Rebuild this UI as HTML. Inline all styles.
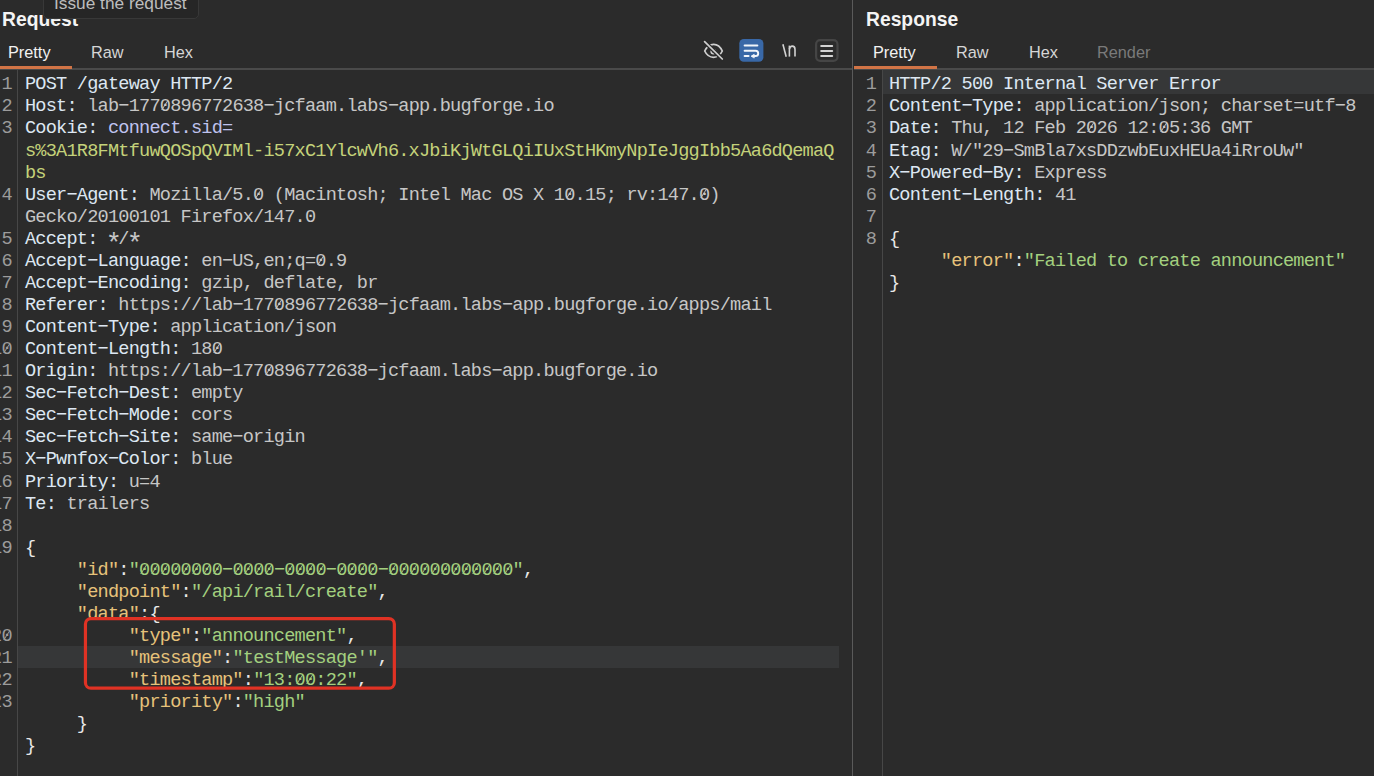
<!DOCTYPE html>
<html><head><meta charset="utf-8">
<style>
html,body{margin:0;padding:0;}
body{width:1374px;height:776px;overflow:hidden;background:#2b2b2b;position:relative;font-family:"Liberation Sans",sans-serif;}
.abs{position:absolute;}
.title{position:absolute;font-weight:bold;font-size:19.3px;color:#f4f4f4;line-height:1;white-space:nowrap;}
.tab{position:absolute;font-size:16.3px;color:#d6d6d6;line-height:1;white-space:nowrap;}
.sep{position:absolute;height:2px;background:#4a4a4a;}
.orange{position:absolute;height:3px;background:#d17446;}
.vline{position:absolute;width:1px;background:#474747;}
.code{position:absolute;font-family:"Liberation Mono",monospace;font-size:18.6px;letter-spacing:-0.79px;white-space:pre;}
.row{position:absolute;left:0;height:22px;line-height:22px;}
.ln{position:absolute;font-family:"Liberation Mono",monospace;font-size:18.6px;letter-spacing:-0.79px;white-space:pre;color:#9c9c9c;text-align:right;}
.hn{color:#dde7f2;}
.hv{color:#c6c6c6;}
.ck{color:#bfc2ee;}
.cv{color:#c4d27a;}
.jk{color:#e6c27a;}
.js{color:#a3d07f;}
.jp{color:#e8e8e8;}
.hl{position:absolute;height:22px;background:#363738;}
.z{position:relative;font-weight:normal;}
.ast{display:inline-block;font-weight:normal;transform:translateY(6px) scale(1.45);}
.z::after{content:"";position:absolute;left:4.4px;top:4.8px;width:1.3px;height:9.4px;background:currentColor;transform:skewX(-33deg);}
</style></head>
<body>

<!-- ========== REQUEST PANEL ========== -->
<div class="title" style="left:2px;top:10px;">Request</div>
<div class="tab" style="left:8px;top:44px;color:#f2f2f2;">Pretty</div>
<div class="tab" style="left:91px;top:44px;">Raw</div>
<div class="tab" style="left:164px;top:44px;">Hex</div>
<div class="sep" style="left:0;top:68px;width:852px;"></div>
<div class="orange" style="left:0;top:66px;width:72px;"></div>
<div class="vline" style="left:17px;top:70px;height:706px;"></div>

<!-- current line highlight -->
<div class="hl" style="left:18px;top:645.7px;width:821px;"></div>

<!-- request code -->
<div class="ln" style="left:-28.2px;top:74.3px;width:40px;">
<div class="row" style="top:0.0px;right:0">1</div>
<div class="row" style="top:22.07px;right:0">2</div>
<div class="row" style="top:44.14px;right:0">3</div>
<div class="row" style="top:66.21px;right:0"></div>
<div class="row" style="top:88.28px;right:0"></div>
<div class="row" style="top:110.35px;right:0">4</div>
<div class="row" style="top:132.42px;right:0"></div>
<div class="row" style="top:154.49px;right:0">5</div>
<div class="row" style="top:176.56px;right:0">6</div>
<div class="row" style="top:198.63px;right:0">7</div>
<div class="row" style="top:220.7px;right:0">8</div>
<div class="row" style="top:242.77px;right:0">9</div>
<div class="row" style="top:264.84px;right:0">1<b class="z">0</b></div>
<div class="row" style="top:286.91px;right:0">11</div>
<div class="row" style="top:308.98px;right:0">12</div>
<div class="row" style="top:331.05px;right:0">13</div>
<div class="row" style="top:353.12px;right:0">14</div>
<div class="row" style="top:375.19px;right:0">15</div>
<div class="row" style="top:397.26px;right:0">16</div>
<div class="row" style="top:419.33px;right:0">17</div>
<div class="row" style="top:441.4px;right:0">18</div>
<div class="row" style="top:463.47px;right:0">19</div>
<div class="row" style="top:485.54px;right:0"></div>
<div class="row" style="top:507.61px;right:0"></div>
<div class="row" style="top:529.68px;right:0"></div>
<div class="row" style="top:551.75px;right:0">2<b class="z">0</b></div>
<div class="row" style="top:573.82px;right:0">21</div>
<div class="row" style="top:595.89px;right:0">22</div>
<div class="row" style="top:617.96px;right:0">23</div>
<div class="row" style="top:640.03px;right:0"></div>
<div class="row" style="top:662.1px;right:0"></div>
</div>
<div class="code" style="left:25px;top:74.3px;">
<div class="row" style="top:0.0px"><span class="hn">POST /gateway HTTP/2</span></div>
<div class="row" style="top:22.07px"><span class="hn">Host: </span><span class="hv">lab&#x2212;177<b class="z">0</b>896772638&#x2212;jcfaam.labs&#x2212;app.bugforge.io</span></div>
<div class="row" style="top:44.14px"><span class="hn">Cookie: </span><span class="ck">connect.sid=</span></div>
<div class="row" style="top:66.21px"><span class="cv">s%3A1R8FMtfuwQOSpQVIMl-i57xC1YlcwVh6.xJbiKjWtGLQiIUxStHKmyNpIeJggIbb5Aa6dQemaQ</span></div>
<div class="row" style="top:88.28px"><span class="cv">bs</span></div>
<div class="row" style="top:110.35px"><span class="hn">User&#x2212;Agent: </span><span class="hv">Mozilla/5.<b class="z">0</b> (Macintosh; Intel Mac OS X 1<b class="z">0</b>.15; rv:147.<b class="z">0</b>)</span></div>
<div class="row" style="top:132.42px"><span class="hv">Gecko/20100101 Firefox/147.0</span></div>
<div class="row" style="top:154.49px"><span class="hn">Accept: </span><span class="hv"><b class="ast">*</b>/<b class="ast">*</b></span></div>
<div class="row" style="top:176.56px"><span class="hn">Accept&#x2212;Language: </span><span class="hv">en&#x2212;US,en;q=<b class="z">0</b>.9</span></div>
<div class="row" style="top:198.63px"><span class="hn">Accept&#x2212;Encoding: </span><span class="hv">gzip, deflate, br</span></div>
<div class="row" style="top:220.7px"><span class="hn">Referer: </span><span class="hv">https://lab&#x2212;177<b class="z">0</b>896772638&#x2212;jcfaam.labs&#x2212;app.bugforge.io/apps/mail</span></div>
<div class="row" style="top:242.77px"><span class="hn">Content&#x2212;Type: </span><span class="hv">application/json</span></div>
<div class="row" style="top:264.84px"><span class="hn">Content&#x2212;Length: </span><span class="hv">18<b class="z">0</b></span></div>
<div class="row" style="top:286.91px"><span class="hn">Origin: </span><span class="hv">https://lab&#x2212;177<b class="z">0</b>896772638&#x2212;jcfaam.labs&#x2212;app.bugforge.io</span></div>
<div class="row" style="top:308.98px"><span class="hn">Sec&#x2212;Fetch&#x2212;Dest: </span><span class="hv">empty</span></div>
<div class="row" style="top:331.05px"><span class="hn">Sec&#x2212;Fetch&#x2212;Mode: </span><span class="hv">cors</span></div>
<div class="row" style="top:353.12px"><span class="hn">Sec&#x2212;Fetch&#x2212;Site: </span><span class="hv">same&#x2212;origin</span></div>
<div class="row" style="top:375.19px"><span class="hn">X&#x2212;Pwnfox&#x2212;Color: </span><span class="hv">blue</span></div>
<div class="row" style="top:397.26px"><span class="hn">Priority: </span><span class="hv">u=4</span></div>
<div class="row" style="top:419.33px"><span class="hn">Te: </span><span class="hv">trailers</span></div>
<div class="row" style="top:441.4px"></div>
<div class="row" style="top:463.47px"><span class="jp">{</span></div>
<div class="row" style="top:485.54px">     <span class="jk">"id"</span><span class="jp">:</span><span class="js">"<b class="z">0</b><b class="z">0</b><b class="z">0</b><b class="z">0</b><b class="z">0</b><b class="z">0</b><b class="z">0</b><b class="z">0</b>&#x2212;<b class="z">0</b><b class="z">0</b><b class="z">0</b><b class="z">0</b>&#x2212;<b class="z">0</b><b class="z">0</b><b class="z">0</b><b class="z">0</b>&#x2212;<b class="z">0</b><b class="z">0</b><b class="z">0</b><b class="z">0</b>&#x2212;<b class="z">0</b><b class="z">0</b><b class="z">0</b><b class="z">0</b><b class="z">0</b><b class="z">0</b><b class="z">0</b><b class="z">0</b><b class="z">0</b><b class="z">0</b><b class="z">0</b><b class="z">0</b>"</span><span class="jp">,</span></div>
<div class="row" style="top:507.61px">     <span class="jk">"endpoint"</span><span class="jp">:</span><span class="js">"/api/rail/create"</span><span class="jp">,</span></div>
<div class="row" style="top:529.68px">     <span class="jk">"data"</span><span class="jp">:{</span></div>
<div class="row" style="top:551.75px">          <span class="jk">"type"</span><span class="jp">:</span><span class="js">"announcement"</span><span class="jp">,</span></div>
<div class="row" style="top:573.82px">          <span class="jk">"message"</span><span class="jp">:</span><span class="js">"testMessage'"</span><span class="jp">,</span></div>
<div class="row" style="top:595.89px">          <span class="jk">"timestamp"</span><span class="jp">:</span><span class="js">"13:<b class="z">0</b><b class="z">0</b>:22"</span><span class="jp">,</span></div>
<div class="row" style="top:617.96px">          <span class="jk">"priority"</span><span class="jp">:</span><span class="js">"high"</span></div>
<div class="row" style="top:640.03px">     <span class="jp">}</span></div>
<div class="row" style="top:662.1px"><span class="jp">}</span></div>
</div>

<!-- tooltip -->
<div class="abs" style="left:43px;top:-10px;width:154px;height:27px;background:#262626;border:1px solid #383838;border-radius:5px;"></div>
<div class="abs" style="left:54px;top:-5.5px;font-size:17.3px;color:#bdbdbd;line-height:1;white-space:nowrap;">Issue the request</div>

<!-- overlay icons -->
<svg class="abs" style="left:0;top:0;" width="1374" height="776" viewBox="0 0 1374 776">
 <!-- eye-off -->
 <g fill="none" stroke="#cfcfcf" stroke-width="1.7" stroke-linecap="round">
  <path d="M704.7,51 C706.9,46.5 710,44.3 713.7,44.3 C717.6,44.3 720.5,47 722.3,51 C720.4,55 717.5,57.3 713.5,57.3 C709.8,57.3 706.7,55.2 704.7,51 Z"/>
  <circle cx="713.3" cy="51.6" r="2.1"/>
  <path d="M704.6,41.7 L722.3,59" stroke="#2b2b2b" stroke-width="4.2"/>
  <path d="M704.6,41.7 L722.3,59"/>
 </g>
 <!-- wrap (active) -->
 <rect x="739.3" y="38.9" width="24.1" height="22.9" rx="4.5" fill="#3968a7"/>
 <g fill="none" stroke="#f2f5fa" stroke-width="1.9" stroke-linecap="round" stroke-linejoin="round">
  <path d="M744.6,45.5 H757.4"/>
  <path d="M744.6,50.8 H755.6 A2.6,2.6 0 0 1 755.6,56 H752.6"/>
  <path d="M751.4,56 L754.2,54.3 L754.2,57.7 Z" fill="#f2f5fa" stroke-width="0.8"/>
  <path d="M744.6,56 H748.6"/>
 </g>
 <!-- \n -->
 <g fill="none" stroke="#d2d2d2" stroke-width="1.6" stroke-linecap="butt">
  <path d="M782.9,44.3 L786.2,56.8"/>
  <path d="M789.4,56.6 V45.6"/>
  <path d="M789.4,49.2 C789.9,46.9 791,46.1 792.3,46.1 C794,46.1 795,47.3 795,49.5 V56.6"/>
 </g>
 <!-- menu -->
 <rect x="816.1" y="40.2" width="21.4" height="20.6" rx="4" fill="none" stroke="#454545" stroke-width="2.2"/>
 <g stroke="#d2d2d2" stroke-width="2" stroke-linecap="round">
  <path d="M821.2,46 H832.2"/><path d="M821.2,51 H832.2"/><path d="M821.2,55.9 H832.2"/>
 </g>
 <!-- red annotation box -->
 <rect x="85.45" y="618.6" width="308.9" height="69.6" rx="5.5" fill="none" stroke="#e03224" stroke-width="3.2"/>
</svg>

<!-- ========== DIVIDER ========== -->
<div class="abs" style="left:852px;top:0;width:1px;height:776px;background:#5a5a5a;"></div>

<!-- ========== RESPONSE PANEL ========== -->
<div class="title" style="left:866px;top:10px;">Response</div>
<div class="tab" style="left:873px;top:44px;color:#f2f2f2;">Pretty</div>
<div class="tab" style="left:956px;top:44px;">Raw</div>
<div class="tab" style="left:1029px;top:44px;">Hex</div>
<div class="tab" style="left:1097px;top:44px;color:#7a7a7a;">Render</div>
<div class="sep" style="left:854px;top:68px;width:520px;"></div>
<div class="orange" style="left:854px;top:66px;width:83px;"></div>
<div class="vline" style="left:882px;top:70px;height:706px;"></div>
<div class="hl" style="left:883px;top:70px;height:24.3px;width:491px;"></div>

<!-- response code -->
<div class="ln" style="left:836px;top:74.3px;width:40px;">
<div class="row" style="top:0.0px;right:0">1</div>
<div class="row" style="top:22.07px;right:0">2</div>
<div class="row" style="top:44.14px;right:0">3</div>
<div class="row" style="top:66.21px;right:0">4</div>
<div class="row" style="top:88.28px;right:0">5</div>
<div class="row" style="top:110.35px;right:0">6</div>
<div class="row" style="top:132.42px;right:0">7</div>
<div class="row" style="top:154.49px;right:0">8</div>
<div class="row" style="top:176.56px;right:0"></div>
<div class="row" style="top:198.63px;right:0"></div>
</div>
<div class="code" style="left:889px;top:74.3px;">
<div class="row" style="top:0.0px"><span class="hn">HTTP/2 500 Internal Server Error</span></div>
<div class="row" style="top:22.07px"><span class="hn">Content&#x2212;Type: </span><span class="hv">application/json; charset=utf&#x2212;8</span></div>
<div class="row" style="top:44.14px"><span class="hn">Date: </span><span class="hv">Thu, 12 Feb 2<b class="z">0</b>26 12:<b class="z">0</b>5:36 GMT</span></div>
<div class="row" style="top:66.21px"><span class="hn">Etag: </span><span class="hv">W/"29&#x2212;SmBla7xsDDzwbEuxHEUa4iRroUw"</span></div>
<div class="row" style="top:88.28px"><span class="hn">X&#x2212;Powered&#x2212;By: </span><span class="hv">Express</span></div>
<div class="row" style="top:110.35px"><span class="hn">Content&#x2212;Length: </span><span class="hv">41</span></div>
<div class="row" style="top:132.42px"></div>
<div class="row" style="top:154.49px"><span class="jp">{</span></div>
<div class="row" style="top:176.56px">     <span class="jk">"error"</span><span class="jp">:</span><span class="js">"Failed to create announcement"</span></div>
<div class="row" style="top:198.63px"><span class="jp">}</span></div>
</div>
</body></html>
